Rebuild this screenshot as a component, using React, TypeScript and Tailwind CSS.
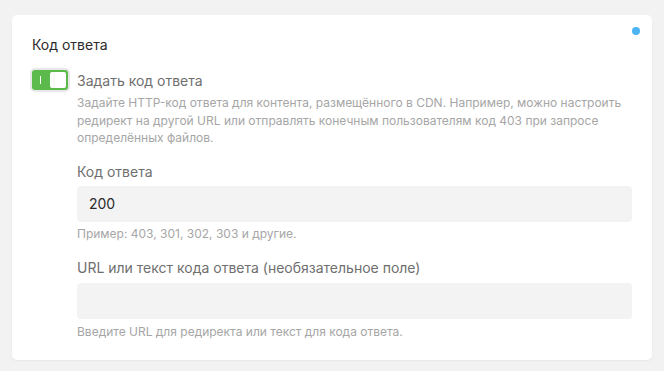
import React from "react";

export default function App() {
  return (
    <div
      className="w-[664px] h-[371px] bg-[#f2f2f2] pt-[15px] px-[12px]"
      style={{ fontFamily: "Inter, 'Noto Sans', sans-serif" }}
    >
      <div className="relative w-[640px] h-[345px] bg-white rounded-[5px] shadow-[0_1px_2px_rgba(0,0,0,0.05)] pt-[20px] pl-[20px] pr-[20px]">
        <div className="absolute left-[620px] top-[12px] w-[8px] h-[8px] rounded-full bg-[#4cb4f5]" />
        <div className="text-[14px] leading-[20px] text-[#2b2b2b]">Код ответа</div>
        <div className="flex items-start mt-[16px]">
          <div className="w-[40px] h-[24px] rounded-[5px] border-2 border-[#e8e8e8] mt-[-3px] ml-[-2px] shrink-0">
            <div className="w-full h-full rounded-[3px] bg-[#5bba4b] flex items-center pl-[8px] pr-[2px]">
              <div className="w-[1px] h-[8px] bg-white" />
              <div className="ml-auto w-[16px] h-[16px] rounded-[2px] bg-white" />
            </div>
          </div>
          <div className="ml-[7px] flex-1">
            <div className="text-[14px] leading-[20px] text-[#6f6f6f]">Задать код ответа</div>
            <div className="mt-[3px] text-[12px] leading-[17.5px] text-[#a6a6a6] pr-[10px]">
              Задайте HTTP-код ответа для контента, размещённого в CDN. Например, можно настроить редирект на другой URL или отправлять конечным пользователям код 403 при запросе определённых файлов.
            </div>
            <div className="mt-[15px] text-[14px] leading-[20px] text-[#6f6f6f]">Код ответа</div>
            <div className="mt-[4px] h-[36px] rounded-[4px] bg-[#f3f3f3] flex items-center px-[12px] text-[14px] text-[#2b2b2b]">
              200
            </div>
            <div className="mt-[3px] text-[12px] leading-[18px] text-[#a6a6a6]">
              Пример: 403, 301, 302, 303 и другие.
            </div>
            <div className="mt-[15px] text-[14px] leading-[20px] text-[#6f6f6f]">
              URL или текст кода ответа (необязательное поле)
            </div>
            <div className="mt-[5px] h-[36px] rounded-[4px] bg-[#f3f3f3]" />
            <div className="mt-[4px] text-[12px] leading-[18px] text-[#a6a6a6]">
              Введите URL для редиректа или текст для кода ответа.
            </div>
          </div>
        </div>
      </div>
    </div>
  );
}
